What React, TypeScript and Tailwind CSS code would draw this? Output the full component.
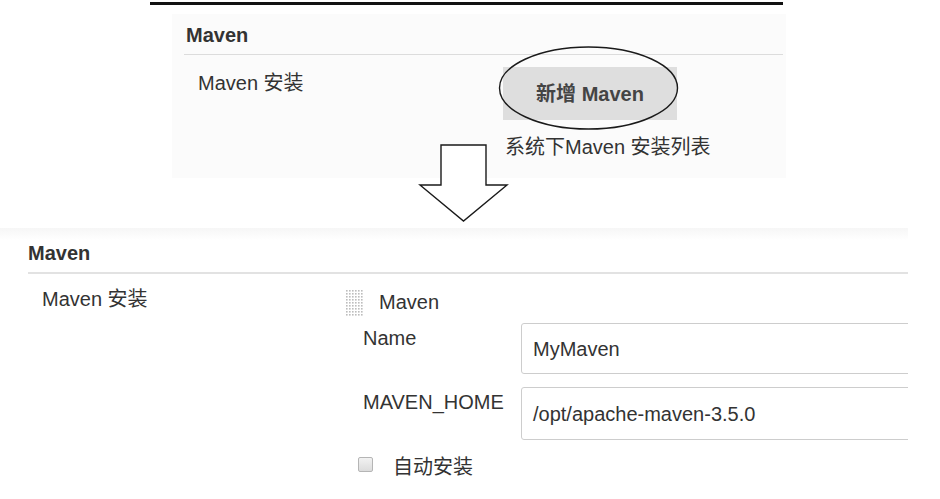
const Grip = () => (
  <svg width="18" height="26" viewBox="0 0 18 26" className="shrink-0">
    {Array.from({ length: 9 }).map((_, r) =>
      Array.from({ length: 6 }).map((_, c) => (
        <rect key={`${r}-${c}`} x={c * 3} y={r * 3} width="1.6" height="1.6" fill="#bdbdbd" />
      ))
    )}
  </svg>
);

const Field = ({ label, value, className = "", h = "h-[51px]" }: { label: string; value: string; className?: string; h?: string }) => (
  <div className={`flex ${className}`}>
    <div className="w-[158px] shrink-0 pt-[3px]">{label}</div>
    <div className="min-w-0 flex-1 overflow-hidden">
      <div className={`flex ${h} w-[440px] items-center rounded-[3px] border border-[#cdcdcd] bg-white pl-[11px]`}>
        {value}
      </div>
    </div>
  </div>
);

export default function App() {
  return (
    <div className="relative h-[499px] w-[940px] overflow-hidden bg-white font-['Liberation_Sans','Noto_Sans_CJK_SC',sans-serif] text-[20px] leading-[24px] text-[#333]">
      {/* black rule at top */}
      <div className="ml-[150px] mt-[2px] h-[3px] w-[633px] bg-[#111]" />

      {/* before: empty maven section */}
      <div className="ml-[172px] mt-[9px] h-[164px] w-[614px] bg-[#fbfbfb]">
        <div className="pl-[14px] pt-[9px] font-bold">Maven</div>
        <div className="ml-[12px] mr-[3px] mt-[7px] h-px bg-[#dcdcdc]" />
        <div className="mt-[16px] flex pl-[26px]">
          <div className="w-[305px] shrink-0">Maven 安装</div>
          <div>
            <div className="-mt-[4px] flex h-[53px] w-[174px] items-center justify-center bg-[#dedede] font-bold text-[#444]">
              新增 Maven
            </div>
            <div className="mt-[15px] pl-[2px] whitespace-nowrap">系统下Maven 安装列表</div>
          </div>
        </div>
      </div>

      {/* after: maven installation added */}
      <div className="mt-[50px] w-[908px] bg-gradient-to-b from-[#f6f6f6] to-white to-[12px] pt-[13px]">
        <div className="pl-[28px] font-bold">Maven</div>
        <div className="ml-[28px] mt-[7px] h-[2px] bg-[#e2e2e2]" />
        <div className="mt-[13px] flex">
          <div className="w-[346px] shrink-0 pl-[42px]">Maven 安装</div>
          <div className="min-w-0 flex-1">
            <div className="flex items-start pt-[3px]">
              <Grip />
              <span className="ml-[15px]">Maven</span>
            </div>
            <div className="ml-[17px] mt-[7px]">
              <Field label="Name" value="MyMaven" />
              <Field label="MAVEN_HOME" value="/opt/apache-maven-3.5.0" className="mt-[13px]" h="h-[53px]" />
            </div>
            <div className="ml-[12px] mt-[17px] flex items-start">
              <div className="h-[15px] w-[15px] rounded-[2px] border border-[#b5b5b5] bg-gradient-to-b from-[#f2f2f2] to-[#dcdcdc]" />
              <span className="ml-[20px] -mt-[2px]">自动安装</span>
            </div>
          </div>
        </div>
      </div>

      {/* annotations drawn over the screenshot */}
      <svg className="pointer-events-none absolute left-0 top-0" width="940" height="499">
        <ellipse cx="588.5" cy="88" rx="89" ry="41" fill="none" stroke="#1a1a1a" strokeWidth="1.4" />
        <polygon
          points="441,145 486,145 486,185 507,185 463.5,221 420,185 441,185"
          fill="#fff"
          stroke="#1a1a1a"
          strokeWidth="1.4"
        />
      </svg>
    </div>
  );
}
